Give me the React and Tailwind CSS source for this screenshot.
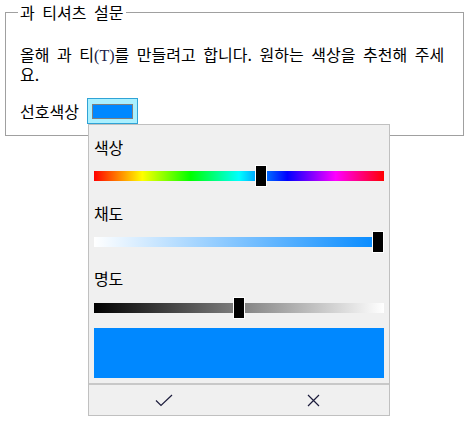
import React from "react";

function Slider({ label, bar, thumb, labelTop, sliderTop }) {
  return (
    <div>
      <div className={`h-[20px] leading-[20px] ${labelTop}`}>{label}</div>
      <div className={`relative h-[20px] flex items-center ${sliderTop}`}>
        <div className={`h-[10px] w-full ${bar}`} />
        {/* 손잡이 */}
        <div className={`absolute top-[-1px] h-[22px] w-[12px] border border-white bg-black ${thumb}`} />
      </div>
    </div>
  );
}

export default function App() {
  return (
    <div className="w-[469px] h-[428px] bg-white px-[5px] pt-[4px] text-black text-[16px] [word-spacing:4px] font-[family-name:'Noto_Sans_CJK_KR','Noto_Sans',sans-serif]">
      <fieldset className="border border-[#a0a0a0] pl-[14px] pr-[14px] pt-[25px] pb-[11px]">
        <legend className="ml-[-2px] px-[2px] leading-[16px]">과 티셔츠 설문</legend>
        <p className="leading-[19px]">
          올해 과 티
          <span className="font-[family-name:'Liberation_Serif',serif] text-[#20204a]">(T)</span>를
          만들려고 합니다. 원하는 색상을 추천해 주세요.
        </p>

        <div className="mt-[14px] flex items-center gap-[8px]">
          <span className="leading-[20px]">선호색상</span>
          <div className="relative">
            <button className="flex h-[26px] w-[51px] items-center justify-center border border-[#2fa3d6] bg-[#aaf0ff]">
              <span className="block h-[15px] w-[41px] border border-[#808080] bg-[#0088ff]" />
            </button>

            {/* 색상 선택 팝업 */}
            <div className="absolute left-[1px] top-full z-10 w-[302px] border border-[#c0c0c0] bg-[#f0f0f0]">
              <div className="px-[5px] pt-[12px] pb-[5px]">
                <Slider
                  label="색상"
                  labelTop=""
                  sliderTop="mt-[9px]"
                  bar="bg-[linear-gradient(to_right,#ff0000,#ffff00,#00ff00,#00ffff,#0000ff,#ff00ff,#ff0000)]"
                  thumb="left-[161px]"
                />
                <Slider
                  label="채도"
                  labelTop="mt-[17px]"
                  sliderTop="mt-[9px]"
                  bar="bg-[linear-gradient(to_right,#ffffff,#0088ff)]"
                  thumb="left-[278px]"
                />
                <Slider
                  label="명도"
                  labelTop="mt-[16px]"
                  sliderTop="mt-[10px]"
                  bar="bg-[linear-gradient(to_right,#000000,#ffffff)]"
                  thumb="left-[139px]"
                />
                <div className="mt-[10px] h-[50px] bg-[#0088ff]" />
              </div>
              <div className="grid h-[32px] grid-cols-2 border-t-2 border-[#c8c8c8]">
                <button className="flex items-center justify-center">
                  <svg width="18" height="13" viewBox="0 0 18 13" fill="none">
                    <path d="M1 6.5 L6 11.5 L17 1" stroke="#1c1c3c" strokeWidth="1.2" />
                  </svg>
                </button>
                <button className="flex items-center justify-center">
                  <svg width="13" height="13" viewBox="0 0 13 13" fill="none">
                    <path d="M1 1 L12 12 M12 1 L1 12" stroke="#1c1c3c" strokeWidth="1.2" />
                  </svg>
                </button>
              </div>
            </div>
          </div>
        </div>
      </fieldset>
    </div>
  );
}
